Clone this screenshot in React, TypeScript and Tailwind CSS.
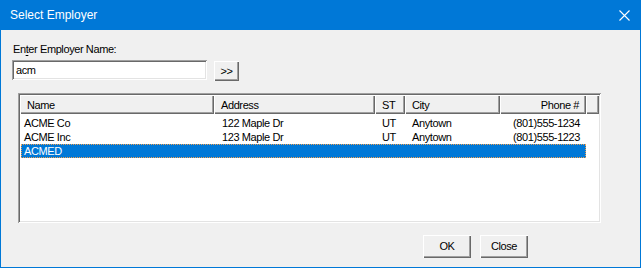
import { useState } from "react";

const columns = [
  { key: "name", label: "Name", width: 194 },
  { key: "address", label: "Address", width: 161 },
  { key: "st", label: "ST", width: 30 },
  { key: "city", label: "City", width: 95 },
  { key: "phone", label: "Phone #", width: 86, right: true },
];

const employers = [
  { name: "ACME Co", address: "122 Maple Dr", st: "UT", city: "Anytown", phone: "(801)555-1234" },
  { name: "ACME Inc", address: "123 Maple Dr", st: "UT", city: "Anytown", phone: "(801)555-1223" },
  { name: "ACMED", address: "", st: "", city: "", phone: "" },
];

const raised =
  "shadow-[inset_1px_1px_0_#ffffff,inset_-1px_-1px_0_#696969,inset_-2px_-2px_0_#a0a0a0]";
const sunken =
  "shadow-[inset_1px_1px_0_#a0a0a0,inset_-1px_-1px_0_#ffffff,inset_2px_2px_0_#696969,inset_-2px_-2px_0_#e3e3e3]";

export default function App() {
  const [query, setQuery] = useState("acm");
  const [selected, setSelected] = useState(2);

  return (
    <div
      className="w-[641px] h-[268px] flex flex-col bg-[#f0f0f0] border-x border-b border-[#0078d7] text-[11px] tracking-[-0.4px] text-black"
      style={{ fontFamily: '"Liberation Sans", Arial, sans-serif' }}
    >
      <div className="h-[30px] shrink-0 flex items-center bg-[#0078d7] text-white pl-[9px]">
        <span className="text-[12px] tracking-normal">Select Employer</span>
        <svg className="ml-auto mr-[10px]" width="11" height="11" viewBox="0 0 11 11">
          <path d="M0.5 0.5 L10.5 10.5 M10.5 0.5 L0.5 10.5" stroke="#ffffff" strokeWidth="1.1" />
        </svg>
      </div>

      <div className="flex-1 flex flex-col">
        <div className="mt-[13px] pl-[12px] leading-[13px]">
          En<span className="underline underline-offset-2">t</span>er Employer Name:
        </div>

        <div className="mt-[4px] pl-[11px] flex items-start gap-[7px]">
          <div className={`w-[195px] h-[20px] bg-white flex items-center pl-[4px] ${sunken}`}>
            <input
              value={query}
              onChange={(e) => setQuery(e.target.value)}
              className="w-full bg-transparent outline-none text-[11px] leading-[14px]"
            />
          </div>
          <button className={`w-[25px] h-[20px] flex items-center justify-center bg-[#f0f0f0] ${raised} shadow-[inset_1px_1px_0_#ffffff,inset_-1px_-1px_0_#696969,inset_-2px_-2px_0_#a0a0a0,0_0_0_1px_#696969] mt-px`}>
            &gt;&gt;
          </button>
        </div>

        <div className={`mt-[12px] ml-[17px] w-[583px] h-[130px] bg-white p-[2px] ${sunken}`}>
          <div className="flex h-[19px] bg-[#f0f0f0]">
            {columns.map((c) => (
              <div
                key={c.key}
                style={{ width: c.width }}
                className={`h-full flex items-center px-[7px] pt-px ${raised} ${c.right ? "justify-end pr-[7px]" : ""}`}
              >
                {c.label}
              </div>
            ))}
            <div className={`flex-1 h-full ${raised}`} />
          </div>

          <div className="mt-[2px] pl-px">
            {employers.map((e, i) => {
              const sel = i === selected;
              return (
                <div
                  key={e.name}
                  onClick={() => setSelected(i)}
                  className={`flex w-[565px] h-[14px] leading-[12px] border ${
                    sel ? "bg-[#0078d7] text-white border-dotted border-[#f0a050]" : "border-transparent"
                  }`}
                >
                  <div className="w-[192px] pl-[2px]">{e.name}</div>
                  <div className="w-[161px] pl-[8px]">{e.address}</div>
                  <div className="w-[30px] pl-[7px]">{e.st}</div>
                  <div className="w-[95px] pl-[7px]">{e.city}</div>
                  <div className="w-[85px] pr-[5px] text-right">{e.phone}</div>
                </div>
              );
            })}
          </div>
        </div>

        <div className="mt-[12px] pl-[422px] flex gap-[9px]">
          <button className={`w-[48px] h-[23px] bg-[#f0f0f0] ${raised}`}>OK</button>
          <button className={`w-[48px] h-[23px] bg-[#f0f0f0] ${raised}`}>Close</button>
        </div>
      </div>
    </div>
  );
}
